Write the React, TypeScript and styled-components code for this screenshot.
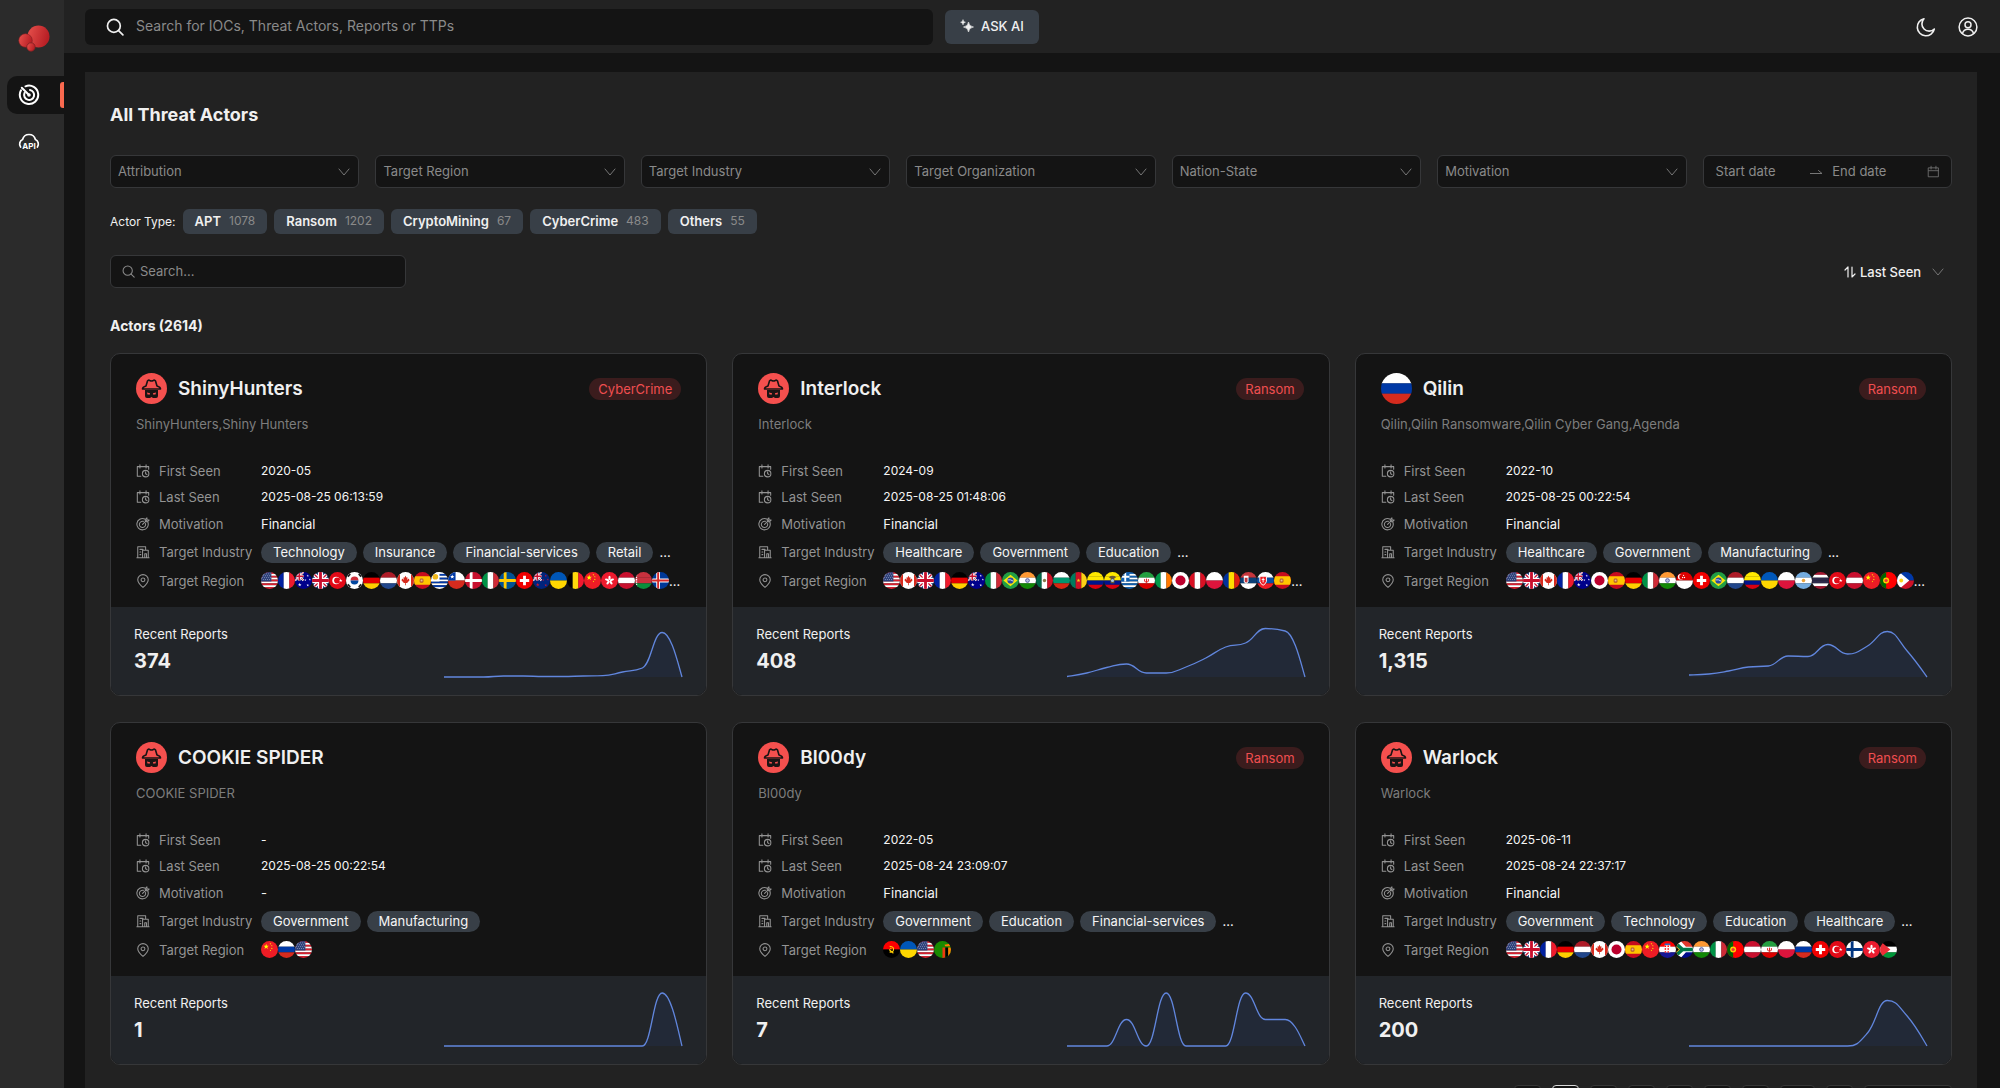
import React from "react";
import styled, { createGlobalStyle, css } from "styled-components";

const color = {
  page: "#141414",
  panel: "#222222",
  sidebar: "#2b2b2b",
  line: "#363739",
  text: "#f0f0f0",
  muted: "#8a8a8a",
  dim: "#767676",
  chip: "#383f47",
  footer: "#222529",
  red: "#ef4e50",
  accent: "#f9694f",
  chart: "#6186dd",
};

const GlobalStyle = createGlobalStyle`
  *, *::before, *::after { box-sizing: border-box; }
  body {
    margin: 0;
    background: ${color.page};
    color: ${color.text};
    font-family: Inter, "Liberation Sans", sans-serif;
    font-size: 14px;
    line-height: 20px;
  }
  button, input, select { font: inherit; color: inherit; margin: 0; }
  h1, h2, h3, p, dl, dt, dd { margin: 0; }
  svg { display: block; flex: none; }
`;

/* ---------- flags ---------- */

const rows = (...c: string[]) =>
  c.map((fill, i) => <rect key={i} y={(18 / c.length) * i} width="18" height={18 / c.length + 0.1} fill={fill} />);
const cols = (...c: string[]) =>
  c.map((fill, i) => <rect key={i} x={(18 / c.length) * i} width={18 / c.length + 0.1} height="18" fill={fill} />);
const bg = (fill: string) => <rect width="18" height="18" fill={fill} />;
const cross = (base: string, line: string, inner?: string) => (
  <>
    {bg(base)}
    <path d="M6.5 0V18M0 9H18" stroke={line} strokeWidth={inner ? 4 : 3} />
    {inner && <path d="M6.5 0V18M0 9H18" stroke={inner} strokeWidth="2" />}
  </>
);
const star = (x: number, y: number, s: number, fill: string) => (
  <path
    transform={`translate(${x} ${y}) scale(${s})`}
    d="M0-1 .24-.32.95-.31.38.12.59.81 0 .4-.59.81-.38.12-.95-.31-.24-.32Z"
    fill={fill}
  />
);
const unionJack = (
  <>
    {bg("#012169")}
    <path d="M0 0 18 18M18 0 0 18" stroke="#fff" strokeWidth="4" />
    <path d="M0 0 18 18M18 0 0 18" stroke="#c8102e" strokeWidth="1.4" />
    <path d="M9 0V18M0 9H18" stroke="#fff" strokeWidth="5.6" />
    <path d="M9 0V18M0 9H18" stroke="#c8102e" strokeWidth="3" />
  </>
);
const southern = (base: string, stars: string) => (
  <>
    {bg(base)}
    <g transform="scale(.5)">{unionJack}</g>
    {star(5, 13.5, 2, stars)}
    {star(13.5, 4, 1.3, stars)}
    {star(11, 8.5, 1.2, stars)}
    {star(15.7, 8, 1.2, stars)}
    {star(13.5, 14, 1.4, stars)}
  </>
);

const FLAGS: Record<string, React.ReactNode> = {
  us: (
    <>
      {rows("#d8202f", "#fff", "#d8202f", "#fff", "#d8202f", "#fff", "#d8202f", "#fff", "#d8202f")}
      <rect width="11" height="10" fill="#2c3f78" />
      <path d="M1 2H11M2 4H11M1 6H11M2 8H11" stroke="#c9cfe4" strokeWidth=".6" strokeDasharray="1 1.2" />
    </>
  ),
  fr: cols("#00209f", "#fff", "#ef1b2d"),
  au: southern("#00008b", "#fff"),
  nz: southern("#00247d", "#cc142b"),
  gb: unionJack,
  tr: (
    <>
      {bg("#e30a17")}
      <circle cx="7.5" cy="9" r="4" fill="#fff" />
      <circle cx="8.6" cy="9" r="3.2" fill="#e30a17" />
      {star(12.4, 9, 2, "#fff")}
    </>
  ),
  kr: (
    <>
      {bg("#fff")}
      <path d="M4.8 9a4.2 4.2 0 0 1 8.4 0Z" fill="#cd2e3a" />
      <path d="M4.8 9a4.2 4.2 0 0 0 8.4 0Z" fill="#0047a0" />
      <path d="m2 5 2.5-3M13.5 2 16 5M2 13l2.5 3M16 13l-2.5 3" stroke="#222" strokeWidth="1.8" />
    </>
  ),
  de: rows("#000", "#e60000", "#ffce00"),
  nl: rows("#ae1c28", "#fff", "#21468b"),
  ca: (
    <>
      {bg("#fff")}
      <path d="M0 0H3.2V18H0ZM14.8 0H18V18H14.8Z" fill="#d52b1e" />
      <path d="m9 4 1.2 2 1-.4-.4 2.8 1.6-1.4.9 1.7-2.6 3H9.4V14H8.6V11.7H7.3L4.7 8.7l.9-1.7L7.2 8.4 6.8 5.6l1 .4Z" fill="#d52b1e" />
    </>
  ),
  es: (
    <>
      {bg("#c60b1e")}
      <rect y="4.5" width="18" height="9" fill="#ffc400" />
      <rect x="6" y="7" width="4" height="4.5" rx="1.5" fill="#b5542b" />
      <rect x="7" y="8" width="2" height="2" fill="#e8c48a" />
    </>
  ),
  uy: (
    <>
      {rows("#fff", "#0038a8", "#fff", "#0038a8", "#fff", "#0038a8", "#fff", "#0038a8", "#fff")}
      <rect width="9" height="10" fill="#fff" />
      <circle cx="4.6" cy="5" r="3" fill="#f0b81c" />
    </>
  ),
  cl: (
    <>
      {rows("#fff", "#d52b1e")}
      <rect width="8" height="9" fill="#0039a6" />
      {star(4.5, 5, 2.4, "#fff")}
    </>
  ),
  dk: cross("#c8102e", "#fff"),
  it: cols("#009246", "#fff", "#ce2b37"),
  se: cross("#005293", "#fecb00"),
  ch: (
    <>
      {bg("#f00000")}
      <path d="M9 4V14M4 9H14" stroke="#fff" strokeWidth="3" />
    </>
  ),
  ua: rows("#0057b8", "#ffd700"),
  be: cols("#000", "#ffd90c", "#f31830"),
  cn: (
    <>
      {bg("#ee1c25")}
      {star(5.5, 6, 3, "#ff0")}
      {star(10, 3, 1, "#ff0")}
      {star(11.5, 5, 1, "#ff0")}
      {star(11.5, 8, 1, "#ff0")}
      {star(10, 10, 1, "#ff0")}
    </>
  ),
  hk: (
    <>
      {bg("#ec1b2e")}
      {[0, 72, 144, 216, 288].map((a) => (
        <ellipse key={a} cx="9" cy="6.3" rx="1.2" ry="2.3" fill="#fff" transform={`rotate(${a} 9 9)`} />
      ))}
    </>
  ),
  at: rows("#c8102e", "#fff", "#c8102e"),
  by: (
    <>
      {rows("#c8313e", "#c8313e", "#0a8f3c")}
      <path d="M1.5 0V18" stroke="#fff" strokeWidth="1.6" strokeDasharray="1.5 1" />
    </>
  ),
  is: cross("#003897", "#fff", "#d72828"),
  br: (
    <>
      {bg("#229e45")}
      <path d="m9 3 7.5 6L9 15 1.5 9Z" fill="#f8e509" />
      <circle cx="9" cy="9" r="3.3" fill="#2b49a3" />
      <path d="M6 8.4q3-.8 6 1.3" stroke="#fff" strokeWidth=".8" fill="none" />
    </>
  ),
  in: (
    <>
      {rows("#ff9933", "#fff", "#128807")}
      <circle cx="9" cy="9" r="2" fill="#b9bfe0" stroke="#3b4499" strokeWidth=".8" />
    </>
  ),
  mx: (
    <>
      {cols("#006847", "#fff", "#ce1126")}
      <circle cx="9" cy="9" r="1.8" fill="#8a7a4a" />
    </>
  ),
  bg: rows("#fff", "#00966e", "#d62612"),
  cm: (
    <>
      {cols("#007a5e", "#ce1126", "#fcd116")}
      {star(9, 9, 2.2, "#fcd116")}
    </>
  ),
  co: rows("#ffe800", "#ffe800", "#00148e", "#da0010"),
  ec: (
    <>
      {rows("#ffe800", "#ffe800", "#00148e", "#da0010")}
      <path d="M5 5.5q4-3 8 0l-2 1v5.5H7V6.5Z" fill="#6b5a35" />
      <circle cx="9" cy="9" r="1.6" fill="#a5c9dc" />
    </>
  ),
  gr: (
    <>
      {rows("#0d5eaf", "#fff", "#0d5eaf", "#fff", "#0d5eaf", "#fff", "#0d5eaf", "#fff", "#0d5eaf")}
      <rect width="9" height="10" fill="#0d5eaf" />
      <path d="M4.5 0V10M0 5H9" stroke="#fff" strokeWidth="2" />
    </>
  ),
  ir: (
    <>
      {rows("#239f40", "#fff", "#da0000")}
      <path d="M7 7.5q-1 3 2 3.5 3-.5 2-3.5M9 7v4" stroke="#da0000" strokeWidth=".9" fill="none" />
    </>
  ),
  ie: cols("#009a49", "#fff", "#ff7900"),
  jp: (
    <>
      {bg("#fff")}
      <circle cx="9" cy="9" r="5.3" fill="#bc002d" />
    </>
  ),
  pe: cols("#d91023", "#fff", "#d91023"),
  pl: rows("#fff", "#dc143c"),
  ro: cols("#00319c", "#ffde00", "#de2110"),
  rs: (
    <>
      {rows("#c6363c", "#0c4076", "#fff")}
      <path d="M4 4h5v6q-1 2-2.5 2.5Q5 12 4 10Z" fill="#fff" />
      <path d="M5 6h3v4l-1.5 1.5L5 10Z" fill="#c6363c" />
    </>
  ),
  sk: (
    <>
      {rows("#fff", "#0b4ea2", "#ee1c25")}
      <path d="M3 4.5h7V10q-1 3-3.5 4Q4 13 3 10Z" fill="#ee1c25" stroke="#fff" />
      <path d="M6.5 6v5M5 8h3" stroke="#fff" />
    </>
  ),
  sg: (
    <>
      {rows("#df0000", "#fff")}
      <circle cx="5" cy="5" r="3" fill="#fff" />
      <circle cx="6.3" cy="5" r="2.8" fill="#df0000" />
      <circle cx="8" cy="3.5" r=".7" fill="#fff" />
      <circle cx="7" cy="5.8" r=".7" fill="#fff" />
      <circle cx="9" cy="5.8" r=".7" fill="#fff" />
    </>
  ),
  ar: (
    <>
      {rows("#74acdf", "#fff", "#74acdf")}
      <circle cx="9" cy="9" r="1.9" fill="#eba43b" />
    </>
  ),
  th: rows("#a51931", "#fff", "#2d2a4a", "#2d2a4a", "#fff", "#a51931"),
  pt: (
    <>
      {bg("#f00")}
      <rect width="6.5" height="18" fill="#060" />
      <circle cx="6.5" cy="9" r="3.2" fill="#fc0" />
      <circle cx="6.5" cy="9" r="1.7" fill="#e33" />
    </>
  ),
  ph: (
    <>
      {rows("#0038a8", "#ce1126")}
      <path d="M0-2 13 9 0 20Z" fill="#fff" />
      <circle cx="4.5" cy="9" r="2" fill="#fcd116" />
    </>
  ),
  ru: rows("#fff", "#0039a6", "#d52b1e"),
  ao: (
    <>
      {rows("#f00", "#000")}
      <path d="M7 5.5q5 .5 4 4.5-1 2.5-4 1.5M6.5 9l4.5 4" stroke="#fc0" strokeWidth="1.2" fill="none" />
      {star(8.3, 8, 1.3, "#fc0")}
    </>
  ),
  zm: (
    <>
      {bg("#198a00")}
      <path d="M9 7h3v11H9Z" fill="#ef3a10" />
      <path d="M12 7h3v11h-3Z" fill="#000" />
      <path d="M15 7h3v11h-3ZM11 4l6-1v2.5h-5Z" fill="#ff7d00" />
    </>
  ),
  hr: (
    <>
      {rows("#f00", "#fff", "#171796")}
      <rect x="6" y="4.5" width="6" height="7.5" fill="#fff" />
      <path d="M6 5.5h6M6 8.5h6M6 11.5h6" stroke="#f00" strokeWidth="1.5" strokeDasharray="1.5" />
      <path d="M6 3.5h6" stroke="#2a6fc4" strokeWidth="1.5" />
    </>
  ),
  za: (
    <>
      {rows("#e1392d", "#000c8a")}
      <path d="M0-1 9 9H18M0 19 9 9" stroke="#fff" strokeWidth="6" fill="none" />
      <path d="M-2-1V19L7 9Z" fill="#ffb915" />
      <path d="M-2 1 7 9H18M-2 17 7 9" stroke="#007847" strokeWidth="3.6" fill="none" />
      <path d="M-2 4V14L3 9Z" fill="#000" />
    </>
  ),
  fi: cross("#fff", "#003580"),
  jo: (
    <>
      {rows("#000", "#fff", "#009639")}
      <path d="M0 0 11 9 0 18Z" fill="#ed2e38" />
    </>
  ),
};

const FlagSvg = styled.svg`
  border-radius: 50%;
`;

const Flag = ({ code, size }: { code: string; size: number }) => (
  <FlagSvg width={size} height={size} viewBox="0 0 18 18" aria-hidden="true">
    {FLAGS[code]}
  </FlagSvg>
);

/* ---------- icons ---------- */

const Stroke = ({
  size,
  box = 16,
  width = 1,
  children,
}: {
  size: number;
  box?: number;
  width?: number;
  children: React.ReactNode;
}) => (
  <svg
    width={size}
    height={size}
    viewBox={`0 0 ${box} ${box}`}
    fill="none"
    stroke="currentColor"
    strokeWidth={width}
    strokeLinecap="round"
    strokeLinejoin="round"
    aria-hidden="true"
  >
    {children}
  </svg>
);

const SearchIcon = ({ size, width }: { size: number; width: number }) => (
  <Stroke size={size} width={width}>
    <circle cx="7" cy="7" r="5.7" />
    <path d="m11.2 11.2 3.8 3.8" />
  </Stroke>
);

const ChevronIcon = () => (
  <Stroke size={12} box={12}>
    <path d="m1 3 5 6 5-6" />
  </Stroke>
);

const CalendarIcon = () => (
  <Stroke size={13}>
    <path d="M2 3.5H14V14.5H2ZM2 7H14M5 1.5V5M11 1.5V5" />
  </Stroke>
);

const SeenIcon = () => (
  <Stroke size={14} width={1.2}>
    <path d="M5.5 14H1.5V3H14.5V6M4.5 1V4.5M11.5 1V4.5" />
    <circle cx="11" cy="11" r="3.7" />
    <path d="M11 9V11.2L12.5 12" />
  </Stroke>
);

const TargetIcon = () => (
  <Stroke size={14} width={1.2}>
    <path d="M13.6 6A6.5 6.5 0 1 1 10 2.2" />
    <path d="M10.9 7.5A3.6 3.6 0 1 1 8.4 5" />
    <path d="M7.5 8.5 12.5 3.5M12.5 1V3.5H15L13 5.5 10.8 5.2 10.5 3Z" />
  </Stroke>
);

const IndustryIcon = () => (
  <Stroke size={14} width={1.2}>
    <path d="M1 14.5H15M2 14.5V2H11V5.5M7.5 14.5V6H14V14.5M10 14.5V10H12V14.5M4.5 5H8M4.5 8H5.5M4.5 11H5.5" />
  </Stroke>
);

const PinIcon = () => (
  <Stroke size={14} width={1.2}>
    <path d="M8 15.3Q2 10.5 2 6.7a6 6 0 0 1 12 0Q14 10.5 8 15.3Z" />
    <circle cx="8" cy="6.7" r="2.2" />
  </Stroke>
);

const RadarIcon = () => (
  <Stroke size={22} box={22} width={2}>
    <path d="M7.5 2.3A9.2 9.2 0 1 1 3 6.3" />
    <path d="M12 6A5 5 0 1 1 6.5 9" />
    <path d="m3.8 3.8 6.7 6.7" />
    <circle cx="11" cy="11" r=".8" />
  </Stroke>
);

const ApiIcon = () => (
  <svg width="22" height="18" viewBox="0 0 22 18" aria-hidden="true">
    <path
      d="M2.6 14A5 5 0 0 1 4.6 6.5 6.6 6.6 0 0 1 17.4 6.5 5 5 0 0 1 19.4 14"
      fill="none"
      stroke="currentColor"
      strokeWidth="1.7"
      strokeLinecap="round"
    />
    <text x="11" y="16" textAnchor="middle" fontSize="8" fontWeight="700" fill="currentColor">
      API
    </text>
  </svg>
);

const Logo = () => (
  <svg width="32" height="28" viewBox="0 0 32 28" aria-hidden="true">
    <defs>
      <linearGradient id="logoRed" x1="0" x2="1" y1="0" y2="0.3">
        <stop offset="0" stopColor="#e8524d" />
        <stop offset="1" stopColor="#b81f25" />
      </linearGradient>
    </defs>
    <circle cx="20.5" cy="12.5" r="11" fill="url(#logoRed)" />
    <circle cx="7.5" cy="16.5" r="6.8" fill="url(#logoRed)" stroke="#7c1f22" strokeWidth=".6" />
    <circle cx="13" cy="23" r="4.2" fill="url(#logoRed)" stroke="#7c1f22" strokeWidth=".8" />
  </svg>
);

const SparkleIcon = () => (
  <svg width="14" height="14" viewBox="0 0 14 14" fill="currentColor" aria-hidden="true">
    <path d="M8.5 3Q9 7.5 13.5 8 9 8.5 8.5 13 8 8.5 3.5 8 8 7.5 8.5 3Z" stroke="currentColor" strokeWidth=".6" />
    <path d="M3 .5Q3.3 3 5.5 3.2 3.3 3.5 3 6 2.7 3.5.5 3.2 2.7 3 3 .5Z" stroke="currentColor" strokeWidth=".4" />
  </svg>
);

const MoonIcon = () => (
  <Stroke size={20} box={20} width={1.6}>
    <path d="M8 1.8A8.6 8.6 0 1 0 18.3 12 7 7 0 0 1 8 1.8Z" />
  </Stroke>
);

const UserIcon = () => (
  <Stroke size={20} box={20} width={1.5}>
    <circle cx="10" cy="10" r="8.9" />
    <circle cx="10" cy="7.8" r="3" />
    <path d="M4.5 16.5Q5.5 12.3 10 12.3T15.5 16.5" />
  </Stroke>
);

const SortIcon = () => (
  <Stroke size={12} box={12} width={1.2}>
    <path d="M1 4 4 1V11M8 1V11L11 8" />
  </Stroke>
);

const ArrowIcon = () => (
  <Stroke size={12} box={12}>
    <path d="M0 7.5H12L8.5 4.5" />
  </Stroke>
);

const SpyIcon = () => (
  <svg width="31" height="31" viewBox="0 0 31 31" aria-hidden="true">
    <circle cx="15.5" cy="15.5" r="15.5" fill="#f5504e" />
    <path
      d="M10 13 11.4 8.2Q12.2 6.500 13.8 7.500 15.5 8.500 17.2 7.500 18.8 6.500 19.6 8.200L21 13Q24.500 14 24.500 16H6.500Q6.500 14 10 13Z"
      fill="none"
      stroke="#1a1414"
      strokeWidth="1.6"
      strokeLinejoin="round"
    />
    <path d="M9 17H22V23Q22 25 20 25H17L15.5 24 14 25H11Q9 25 9 23Z" fill="#1a1414" />
    <path d="M11 19.5 14 20.3V21.5H11.5ZM20 19.5 17 20.3V21.5H19.5Z" fill="#f5504e" />
  </svg>
);

/* ---------- shell ---------- */

const Shell = styled.div`
  display: flex;
  height: 100vh;
  overflow: hidden;
`;

const Sidebar = styled.nav`
  flex: none;
  width: 64px;
  display: flex;
  flex-direction: column;
  align-items: flex-end;
  gap: 9px;
  padding-top: 24px;
  background: ${color.sidebar};
`;

const Brand = styled.a`
  align-self: center;
  padding-left: 4px;
  margin-bottom: 15px;
`;

const NavLink = styled.a<{ $active?: boolean }>`
  display: flex;
  align-items: center;
  justify-content: space-between;
  width: 57px;
  height: 38px;
  padding-left: 11px;
  border-radius: 10px 0 0 10px;
  color: #fff;
  ${(p) =>
    p.$active &&
    css`
      background: ${color.page};
      &::after {
        content: "";
        width: 4px;
        height: 26px;
        border-radius: 3px 0 0 3px;
        background: ${color.accent};
      }
    `}
`;

const Column = styled.div`
  flex: 1;
  min-width: 0;
  display: flex;
  flex-direction: column;
`;

const TopBar = styled.header`
  flex: none;
  display: flex;
  align-items: center;
  gap: 12px;
  height: 53px;
  padding: 0 22px 0 21px;
  background: ${color.panel};
`;

const GlobalSearch = styled.label`
  flex: 0 1 848px;
  display: flex;
  align-items: center;
  gap: 12px;
  height: 36px;
  padding: 0 21px;
  border-radius: 6px;
  background: ${color.page};
`;

const BareInput = styled.input`
  flex: 1;
  min-width: 0;
  padding: 0 0 2px;
  border: 0;
  outline: 0;
  background: none;
  &::placeholder {
    color: ${color.muted};
    opacity: 1;
  }
`;

const AskButton = styled.button`
  display: flex;
  align-items: center;
  gap: 7px;
  height: 34px;
  padding: 0 15px 1px;
  border: 0;
  border-radius: 6px;
  background: ${color.chip};
  font-size: 13px;
  font-weight: 500;
`;

const TopActions = styled.div`
  display: flex;
  gap: 22px;
  margin-left: auto;
`;

const IconButton = styled.button`
  padding: 0;
  border: 0;
  background: none;
`;

const Main = styled.main`
  flex: 1;
  min-height: 0;
  overflow-y: auto;
  scrollbar-width: none;
  padding: 19px 23px 0 21px;
`;

const Panel = styled.section`
  padding: 28px 25px;
  background: ${color.panel};
`;

const PageTitle = styled.h1`
  font-size: 18px;
  line-height: 30px;
  font-weight: 700;
`;

/* ---------- filters ---------- */

const field = css`
  height: 33px;
  border: 1px solid ${color.line};
  border-radius: 6px;
  background: ${color.page};
  font-size: 13px;
`;

const Filters = styled.div`
  display: grid;
  grid-template-columns: repeat(7, minmax(0, 1fr));
  gap: 16px;
  margin-top: 25px;
`;

const SelectBox = styled.label`
  ${field}
  display: grid;
  align-items: center;
  color: ${color.dim};
  & > * {
    grid-area: 1 / 1;
  }
  & > svg {
    justify-self: end;
    margin-right: 8px;
    pointer-events: none;
  }
`;

const PlainSelect = styled.select`
  appearance: none;
  width: 100%;
  height: 100%;
  padding: 0 28px 2px 7px;
  border: 0;
  outline: 0;
  background: none;
  color: ${color.muted};
`;

const DateRange = styled.div`
  ${field}
  display: flex;
  align-items: center;
  gap: 10px;
  padding: 0 11px 0 12px;
  color: ${color.dim};
`;

const TypeRow = styled.div`
  display: flex;
  align-items: center;
  gap: 7px;
  margin-top: 21px;
  font-size: 12px;
`;

const TypeChip = styled.button`
  display: flex;
  align-items: center;
  gap: 8px;
  height: 25px;
  padding: 0 12px 1px;
  border: 0;
  border-radius: 6px;
  background: ${color.chip};
  font-size: 13px;
  font-weight: 600;
`;

const Count = styled.span`
  font-size: 12px;
  font-weight: 400;
  color: ${color.muted};
`;

const ListTools = styled.div`
  display: flex;
  align-items: center;
  justify-content: space-between;
  margin-top: 21px;
`;

const ListSearch = styled.label`
  ${field}
  display: flex;
  align-items: center;
  gap: 5px;
  width: 296px;
  padding: 0 11px;
  color: ${color.muted};
`;

const SortBox = styled.label`
  display: flex;
  align-items: center;
  gap: 4px;
  padding-right: 8px;
  font-size: 13px;
  font-weight: 500;
  & > svg:last-child {
    color: ${color.dim};
  }
`;

const SortSelect = styled.select`
  appearance: none;
  width: 68px;
  padding: 0;
  border: 0;
  outline: 0;
  background: none;
`;

const ListTitle = styled.h2`
  margin: 28px 0 17px;
  font-size: 14px;
  line-height: 20px;
  font-weight: 700;
`;

/* ---------- cards ---------- */

const CardGrid = styled.div`
  display: grid;
  grid-template-columns: repeat(3, minmax(0, 1fr));
  gap: 26px 25px;
`;

const Card = styled.article`
  border: 1px solid ${color.line};
  border-radius: 10px;
  overflow: hidden;
  background: ${color.page};
`;

const CardBody = styled.div`
  padding: 19px 25px 13px;
`;

const CardHead = styled.div`
  display: flex;
  align-items: center;
  gap: 11px;
  height: 31px;
`;

const ActorName = styled.h3`
  flex: 1;
  font-size: 19px;
  line-height: 30px;
  font-weight: 600;
`;

const Badge = styled.span`
  padding: 0 9px;
  border-radius: 11px;
  background: #3b1c1d;
  color: ${color.red};
  font-size: 13px;
  line-height: 22px;
`;

const Alias = styled.p`
  margin: 10px 0 24px;
  color: #7d7d7d;
  font-size: 13px;
  line-height: 20px;
`;

const Facts = styled.dl`
  display: grid;
  grid-template-columns: 125px minmax(0, 1fr);
  grid-template-rows: 26px 26px 27px 30px 27px;
  align-items: center;
  font-size: 13px;
  white-space: nowrap;
`;

const FactLabel = styled.dt`
  display: flex;
  align-items: center;
  gap: 9px;
  color: #939393;
`;

const FactValue = styled.dd<{ $gap?: number; $numeric?: boolean }>`
  display: flex;
  align-items: center;
  gap: ${(p) => p.$gap ?? 0}px;
  font-size: ${(p) => (p.$numeric ? 12 : 13)}px;
  color: #f5f5f5;
`;

const Pill = styled.span`
  padding: 0 12px;
  border-radius: 11px;
  background: ${color.chip};
  line-height: 21px;
`;

const CardFoot = styled.footer`
  display: flex;
  align-items: center;
  justify-content: space-between;
  padding: 15px 23px 17px;
  background: ${color.footer};
`;

const FootText = styled.div`
  padding-bottom: 2px;
`;

const FootLabel = styled.p`
  font-size: 13px;
  line-height: 20px;
`;

const FootCount = styled.p`
  margin-top: 3px;
  font-size: 20px;
  line-height: 28px;
  font-weight: 700;
`;

const Pager = styled.nav`
  display: flex;
  justify-content: flex-end;
  gap: 11px;
  margin-top: 20px;
`;

const PageButton = styled.button<{ $active?: boolean; $width?: number }>`
  width: ${(p) => p.$width ?? 27}px;
  height: 27px;
  padding: 0;
  border: 1px solid ${(p) => (p.$active ? "#d9d9d9" : "#363636")};
  border-radius: 4px;
  background: ${color.page};
`;

/* Monotone cubic path through evenly spaced points, so flat runs stay flat.
   Handles a little under half a step long give rounded shoulders. */
function trendPath(values: number[], width: number, base: number) {
  const step = width / (values.length - 1);
  const ys = values.map((v) => base - v);
  const d = ys.slice(1).map((y, i) => (y - ys[i]) / step);
  const m = ys.map((_, i) => {
    if (i === 0 || i === ys.length - 1) return 0;
    const a = d[i - 1];
    const b = d[i];
    return (Math.sign(a) + Math.sign(b)) * Math.min(Math.abs(a), Math.abs(b), 0.25 * Math.abs(a + b));
  });
  m[0] = (3 * d[0] - m[1]) / 2;
  m[m.length - 1] = (3 * d[d.length - 1] - m[m.length - 2]) / 2;
  let path = `M0 ${ys[0]}`;
  for (let i = 1; i < ys.length; i++) {
    const last = i === ys.length - 1;
    const x0 = step * (i - 1);
    const x1 = step * i;
    const t0 = step * 0.45;
    const t1 = last ? step * 0.2 : t0;
    path += `C${x0 + t0} ${ys[i - 1] + m[i - 1] * t0} ${x1 - t1} ${ys[i] - m[i] * t1} ${x1} ${ys[i]}`;
  }
  return path;
}

const Trend = ({ values }: { values: number[] }) => {
  const line = trendPath(values, 238, 55);
  return (
    <svg width="239" height="56" viewBox="0 0 239 56" fill="none" aria-hidden="true">
      <path d={`${line}V55H0Z`} fill="#3058c8" fillOpacity="0.09" />
      <path d={line} stroke={color.chart} strokeWidth="1.3" />
    </svg>
  );
};

/* ---------- data ---------- */

interface Actor {
  name: string;
  alias: string;
  flag?: string;
  type?: string;
  first: string;
  last: string;
  motivation: string;
  industries: string[];
  moreIndustries?: boolean;
  regions: string;
  moreRegions?: boolean;
  reports: string;
  trend: number[];
}

const ACTORS: Actor[] = [
  {
    name: "ShinyHunters",
    alias: "ShinyHunters,Shiny Hunters",
    type: "CyberCrime",
    first: "2020-05",
    last: "2025-08-25 06:13:59",
    motivation: "Financial",
    industries: ["Technology", "Insurance", "Financial-services", "Retail"],
    moreIndustries: true,
    regions: "us fr au gb tr kr de nl ca es uy cl dk it se ch nz ua be cn hk at by is",
    moreRegions: true,
    reports: "374",
    trend: [0, 0, 0, 1, 1, 0.5, 0.5, 1, 1.3, 5, 9, 44.5, 0],
  },
  {
    name: "Interlock",
    alias: "Interlock",
    type: "Ransom",
    first: "2024-09",
    last: "2025-08-25 01:48:06",
    motivation: "Financial",
    industries: ["Healthcare", "Government", "Education"],
    moreIndustries: true,
    regions: "us ca gb fr de au it br in mx bg cm co ec gr ir ie jp pe pl ro rs sk es",
    moreRegions: true,
    reports: "408",
    trend: [0.5, 4, 9.5, 13, 4, 4, 10, 19, 30, 34, 48.5, 46, 0],
  },
  {
    name: "Qilin",
    alias: "Qilin,Qilin Ransomware,Qilin Cyber Gang,Agenda",
    flag: "ru",
    type: "Ransom",
    first: "2022-10",
    last: "2025-08-25 00:22:54",
    motivation: "Financial",
    industries: ["Healthcare", "Government", "Manufacturing"],
    moreIndustries: true,
    regions: "us gb ca fr au jp es de it in sg ch br nl co ua pl ar th tr at cn pt ph",
    moreRegions: true,
    reports: "1,315",
    trend: [2, 3, 6, 10, 11, 21, 20.5, 32.5, 23, 31, 45.5, 26, 0],
  },
  {
    name: "COOKIE SPIDER",
    alias: "COOKIE SPIDER",
    first: "-",
    last: "2025-08-25 00:22:54",
    motivation: "-",
    industries: ["Government", "Manufacturing"],
    regions: "cn ru us",
    reports: "1",
    trend: [0, 0, 0, 0, 0, 0, 0, 0, 0, 0, 0, 53, 0],
  },
  {
    name: "Bl00dy",
    alias: "Bl00dy",
    type: "Ransom",
    first: "2022-05",
    last: "2025-08-24 23:09:07",
    motivation: "Financial",
    industries: ["Government", "Education", "Financial-services"],
    moreIndustries: true,
    regions: "ao ua us zm",
    reports: "7",
    trend: [0, 0, 0, 26.5, 0, 53, 0, 0, 0, 53, 26.5, 26.5, 0],
  },
  {
    name: "Warlock",
    alias: "Warlock",
    type: "Ransom",
    first: "2025-06-11",
    last: "2025-08-24 22:37:17",
    motivation: "Financial",
    industries: ["Government", "Technology", "Education", "Healthcare"],
    moreIndustries: true,
    regions: "us gb fr de nl ca jp es cn hr za in it pt at ir pl ru ch tr fi hk jo",
    reports: "200",
    trend: [0, 0, 0, 0, 0, 0, 0, 0, 0, 13, 45.5, 30, 0],
  },
];

const FILTERS = ["Attribution", "Target Region", "Target Industry", "Target Organization", "Nation-State", "Motivation"];

const TYPES: [string, number][] = [
  ["APT", 1078],
  ["Ransom", 1202],
  ["CryptoMining", 67],
  ["CyberCrime", 483],
  ["Others", 55],
];

const ActorCard = ({ actor }: { actor: Actor }) => (
  <Card>
    <CardBody>
      <CardHead>
        {actor.flag ? <Flag code={actor.flag} size={31} /> : <SpyIcon />}
        <ActorName>{actor.name}</ActorName>
        {actor.type && <Badge>{actor.type}</Badge>}
      </CardHead>
      <Alias>{actor.alias}</Alias>
      <Facts>
        <FactLabel>
          <SeenIcon />
          First Seen
        </FactLabel>
        <FactValue $numeric>{actor.first}</FactValue>
        <FactLabel>
          <SeenIcon />
          Last Seen
        </FactLabel>
        <FactValue $numeric>{actor.last}</FactValue>
        <FactLabel>
          <TargetIcon />
          Motivation
        </FactLabel>
        <FactValue>{actor.motivation}</FactValue>
        <FactLabel>
          <IndustryIcon />
          Target Industry
        </FactLabel>
        <FactValue $gap={6}>
          {actor.industries.map((name) => (
            <Pill key={name}>{name}</Pill>
          ))}
          {actor.moreIndustries && <span>...</span>}
        </FactValue>
        <FactLabel>
          <PinIcon />
          Target Region
        </FactLabel>
        <FactValue>
          {actor.regions.split(" ").map((code) => (
            <Flag key={code} code={code} size={17} />
          ))}
          {actor.moreRegions && <span>...</span>}
        </FactValue>
      </Facts>
    </CardBody>
    <CardFoot>
      <FootText>
        <FootLabel>Recent Reports</FootLabel>
        <FootCount>{actor.reports}</FootCount>
      </FootText>
      <Trend values={actor.trend} />
    </CardFoot>
  </Card>
);

export default function App() {
  return (
    <>
      <GlobalStyle />
      <Shell>
        <Sidebar aria-label="Main">
          <Brand href="#" aria-label="Home">
            <Logo />
          </Brand>
          <NavLink href="#actors" aria-label="Threat actors" $active>
            <RadarIcon />
          </NavLink>
          <NavLink href="#api" aria-label="API">
            <ApiIcon />
          </NavLink>
        </Sidebar>
        <Column>
          <TopBar>
            <GlobalSearch>
              <SearchIcon size={18} width={1.5} />
              <BareInput aria-label="Global search" placeholder="Search for IOCs, Threat Actors, Reports or TTPs" />
            </GlobalSearch>
            <AskButton type="button">
              <SparkleIcon />
              ASK AI
            </AskButton>
            <TopActions>
              <IconButton type="button" aria-label="Dark mode">
                <MoonIcon />
              </IconButton>
              <IconButton type="button" aria-label="Account">
                <UserIcon />
              </IconButton>
            </TopActions>
          </TopBar>
          <Main>
            <Panel>
              <PageTitle>All Threat Actors</PageTitle>
              <Filters>
                {FILTERS.map((name) => (
                  <SelectBox key={name}>
                    <PlainSelect aria-label={name} defaultValue="">
                      <option value="">{name}</option>
                    </PlainSelect>
                    <ChevronIcon />
                  </SelectBox>
                ))}
                <DateRange>
                  <BareInput aria-label="Start date" placeholder="Start date" />
                  <ArrowIcon />
                  <BareInput aria-label="End date" placeholder="End date" />
                  <CalendarIcon />
                </DateRange>
              </Filters>
              <TypeRow>
                <span>Actor Type:</span>
                {TYPES.map(([name, count]) => (
                  <TypeChip type="button" key={name}>
                    {name}
                    <Count>{count}</Count>
                  </TypeChip>
                ))}
              </TypeRow>
              <ListTools>
                <ListSearch>
                  <SearchIcon size={13} width={1.3} />
                  <BareInput aria-label="Search actors" placeholder="Search..." />
                </ListSearch>
                <SortBox>
                  <SortIcon />
                  <SortSelect aria-label="Sort by" defaultValue="last">
                    <option value="last">Last Seen</option>
                  </SortSelect>
                  <ChevronIcon />
                </SortBox>
              </ListTools>
              <ListTitle>Actors (2614)</ListTitle>
              <CardGrid>
                {ACTORS.map((actor) => (
                  <ActorCard key={actor.name} actor={actor} />
                ))}
              </CardGrid>
              <Pager aria-label="Pagination">
                <PageButton type="button" aria-label="Previous page" />
                <PageButton type="button" aria-label="Page 1" $active />
                <PageButton type="button" aria-label="Page 2" />
                <PageButton type="button" aria-label="Page 3" />
                <PageButton type="button" aria-label="Page 4" />
                <PageButton type="button" aria-label="Page 5" />
                <PageButton type="button" aria-label="More pages" />
                <PageButton type="button" aria-label="Last page" $width={35} />
                <PageButton type="button" aria-label="Next page" />
                <PageButton type="button" aria-label="Page size" $width={88} />
              </Pager>
            </Panel>
          </Main>
        </Column>
      </Shell>
    </>
  );
}
